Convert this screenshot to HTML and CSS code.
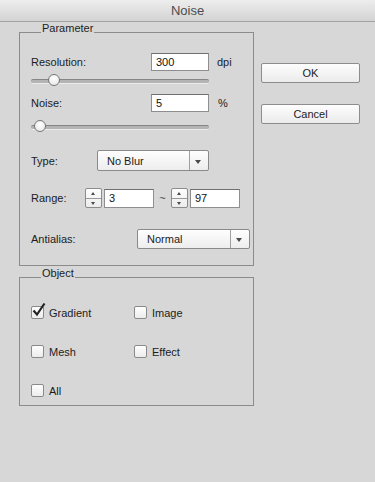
FILE: index.html
```html
<!DOCTYPE html>
<html lang="en">
  <head>
    <meta charset="UTF-8" />
    <title>Noise</title>
    <link rel="stylesheet" href="styles.css">
  </head>
  <body>
    <div class="titlebar">Noise</div>

    <div class="dialog">
      <div class="groups">
        <fieldset class="group group-param">
          <legend>Parameter</legend>
          <div class="param-body">
            <div class="row">
              <span class="lbl lbl-res">Resolution:</span>
              <input class="field" type="text" value="300">
              <span class="unit">dpi</span>
            </div>
            <div class="slider slider-res">
              <span class="thumb" style="left: 17px"></span>
            </div>

            <div class="row row-noise">
              <span class="lbl lbl-res">Noise:</span>
              <input class="field" type="text" value="5">
              <span class="unit unit-pct">%</span>
            </div>
            <div class="slider slider-noise">
              <span class="thumb" style="left: 3px"></span>
            </div>

            <div class="row row-type">
              <span class="lbl lbl-type">Type:</span>
              <div class="select select-type">
                <span class="select-text">No Blur</span>
                <span class="select-arrow"></span>
              </div>
            </div>

            <div class="row row-range">
              <span class="lbl lbl-range">Range:</span>
              <div class="spinner">
                <span class="spin-up"></span>
                <span class="spin-down"></span>
              </div>
              <input class="field field-range" type="text" value="3">
              <span class="tilde">~</span>
              <div class="spinner">
                <span class="spin-up"></span>
                <span class="spin-down"></span>
              </div>
              <input class="field field-range" type="text" value="97">
            </div>

            <div class="row row-anti">
              <span class="lbl lbl-anti">Antialias:</span>
              <div class="select select-anti">
                <span class="select-text">Normal</span>
                <span class="select-arrow"></span>
              </div>
            </div>
          </div>
        </fieldset>

        <fieldset class="group group-obj">
          <legend>Object</legend>
          <div class="obj-body">
            <label class="check">
              <span class="box">
                <svg class="tick" width="16" height="16" viewBox="0 0 16 16">
                  <path d="M2.5 7.5 L6 11.5 L13.5 0.5" fill="none" stroke="#222" stroke-width="2.2" />
                </svg>
              </span>
              Gradient
            </label>
            <label class="check"><span class="box"></span>Image</label>
            <label class="check"><span class="box"></span>Mesh</label>
            <label class="check"><span class="box"></span>Effect</label>
            <label class="check"><span class="box"></span>All</label>
          </div>
        </fieldset>
      </div>

      <div class="buttons">
        <button class="btn">OK</button>
        <button class="btn">Cancel</button>
      </div>
    </div>
  </body>
</html>
```

FILE: styles.css
```css
* {
  box-sizing: border-box;
}

body {
  margin: 0;
  background-color: #d7d7d7;
  font-family: "Liberation Sans", Arial, sans-serif;
  font-size: 11px;
  color: #1c1c1c;
}

.titlebar {
  height: 22px;
  border-bottom: 1px solid #a3a3a3;
  background: linear-gradient(#ededed, #d3d3d3);
  text-align: center;
  font-size: 13px;
  line-height: 22px;
  color: #4d4d4d;
}

.dialog {
  display: flex;
  align-items: flex-start;
  padding-left: 19px;
}

.groups {
  width: 235px;
}

/* group boxes */
.group {
  margin: 0;
  padding: 0;
  min-width: 0;
  border: 1px solid #8b8b8b;
}

.group legend {
  margin-left: 21px;
  padding: 0 1px 8px;
  font-size: 11px;
  line-height: 13px;
}

.group-param {
  margin-top: 0;
}

.group-obj {
  margin-top: 1px;
}

.param-body {
  padding: 10px 0 16px 11px;
}

.row {
  display: flex;
  align-items: center;
  height: 18px;
}

.lbl-res {
  width: 120px;
}

.lbl-type {
  width: 66px;
}

.lbl-range {
  width: 54px;
}

.lbl-anti {
  width: 106px;
}

.field {
  width: 58px;
  height: 18px;
  margin: 0;
  padding: 0 4px;
  border: 1px solid #8e8e8e;
  border-top-color: #707070;
  background: #fff;
  font: inherit;
  color: #111;
  outline: none;
}

.unit {
  margin-left: 8px;
}

.unit-pct {
  margin-left: 9px;
}

/* sliders */
.slider {
  position: relative;
  width: 178px;
  height: 12px;
  margin-top: 3px;
}

.slider::before {
  content: "";
  position: absolute;
  left: 0;
  right: 0;
  top: 5px;
  height: 3px;
  border-radius: 2px;
  border-top: 1px solid #858585;
  border-bottom: 1px solid #ececec;
  background: #b4b4b4;
}

.thumb {
  position: absolute;
  top: 0;
  width: 12px;
  height: 12px;
  border-radius: 50%;
  border: 1px solid #777;
  background: radial-gradient(circle at 50% 35%, #fff, #e4e4e4);
}

.row-noise {
  margin-top: 8px;
}

.slider-noise {
  margin-top: 8px;
}

/* dropdowns */
.row-type {
  height: 21px;
  margin-top: 18px;
}

.select {
  display: flex;
  align-items: center;
  height: 100%;
  border: 1px solid #8a8a8a;
  border-radius: 2px;
  background: linear-gradient(#fefefe, #ededed);
}

.select-type {
  width: 112px;
}

.select-anti {
  width: 113px;
}

.select-text {
  flex: 1;
  padding-left: 9px;
  font-size: 11px;
}

.select-arrow {
  position: relative;
  width: 19px;
  height: 100%;
  border-left: 1px solid #a0a0a0;
}

.select-arrow::after {
  content: "";
  position: absolute;
  left: 5px;
  top: 50%;
  margin-top: -1px;
  border-left: 3.5px solid transparent;
  border-right: 3.5px solid transparent;
  border-top: 4px solid #4a4a4a;
}

/* range */
.row-range {
  height: 20px;
  margin-top: 17px;
}

.spinner {
  display: flex;
  flex-direction: column;
  width: 17px;
  height: 20px;
  border: 1px solid #8c8c8c;
  border-radius: 2px;
  background: linear-gradient(#fefefe, #ececec);
}

.spin-up,
.spin-down {
  position: relative;
  flex: 1;
}

.spin-up {
  border-bottom: 1px solid #9a9a9a;
}

.spin-up::after,
.spin-down::after {
  content: "";
  position: absolute;
  left: 5px;
  top: 3px;
  border-left: 2.5px solid transparent;
  border-right: 2.5px solid transparent;
}

.spin-up::after {
  border-bottom: 3px solid #4a4a4a;
}

.spin-down::after {
  top: 3px;
  border-top: 3px solid #4a4a4a;
}

.field-range {
  width: 50px;
  height: 19px;
  margin-left: 2px;
}

.tilde {
  width: 17px;
  text-align: center;
  color: #444;
}

.row-anti {
  height: 20px;
  margin-top: 21px;
}

/* checkboxes */
.obj-body {
  display: grid;
  grid-template-columns: 103px 103px;
  row-gap: 26px;
  padding: 18px 0 8px 11px;
}

.check {
  display: flex;
  align-items: center;
  height: 13px;
}

.box {
  position: relative;
  width: 13px;
  height: 13px;
  margin-right: 5px;
  border: 1px solid #8a8a8a;
  border-radius: 2px;
  background: linear-gradient(#fefefe, #ececec);
}

.tick {
  position: absolute;
  left: -1px;
  top: -4px;
  overflow: visible;
}

/* buttons */
.buttons {
  display: flex;
  flex-direction: column;
  gap: 21px;
  margin-left: 7px;
  padding-top: 41px;
}

.btn {
  width: 99px;
  height: 20px;
  margin: 0;
  padding: 0;
  border: 1px solid #8d8d8d;
  border-radius: 2px;
  background: linear-gradient(#fdfdfd, #ebebeb);
  font-family: inherit;
  font-size: 11px;
  color: #1c1c1c;
}
```
